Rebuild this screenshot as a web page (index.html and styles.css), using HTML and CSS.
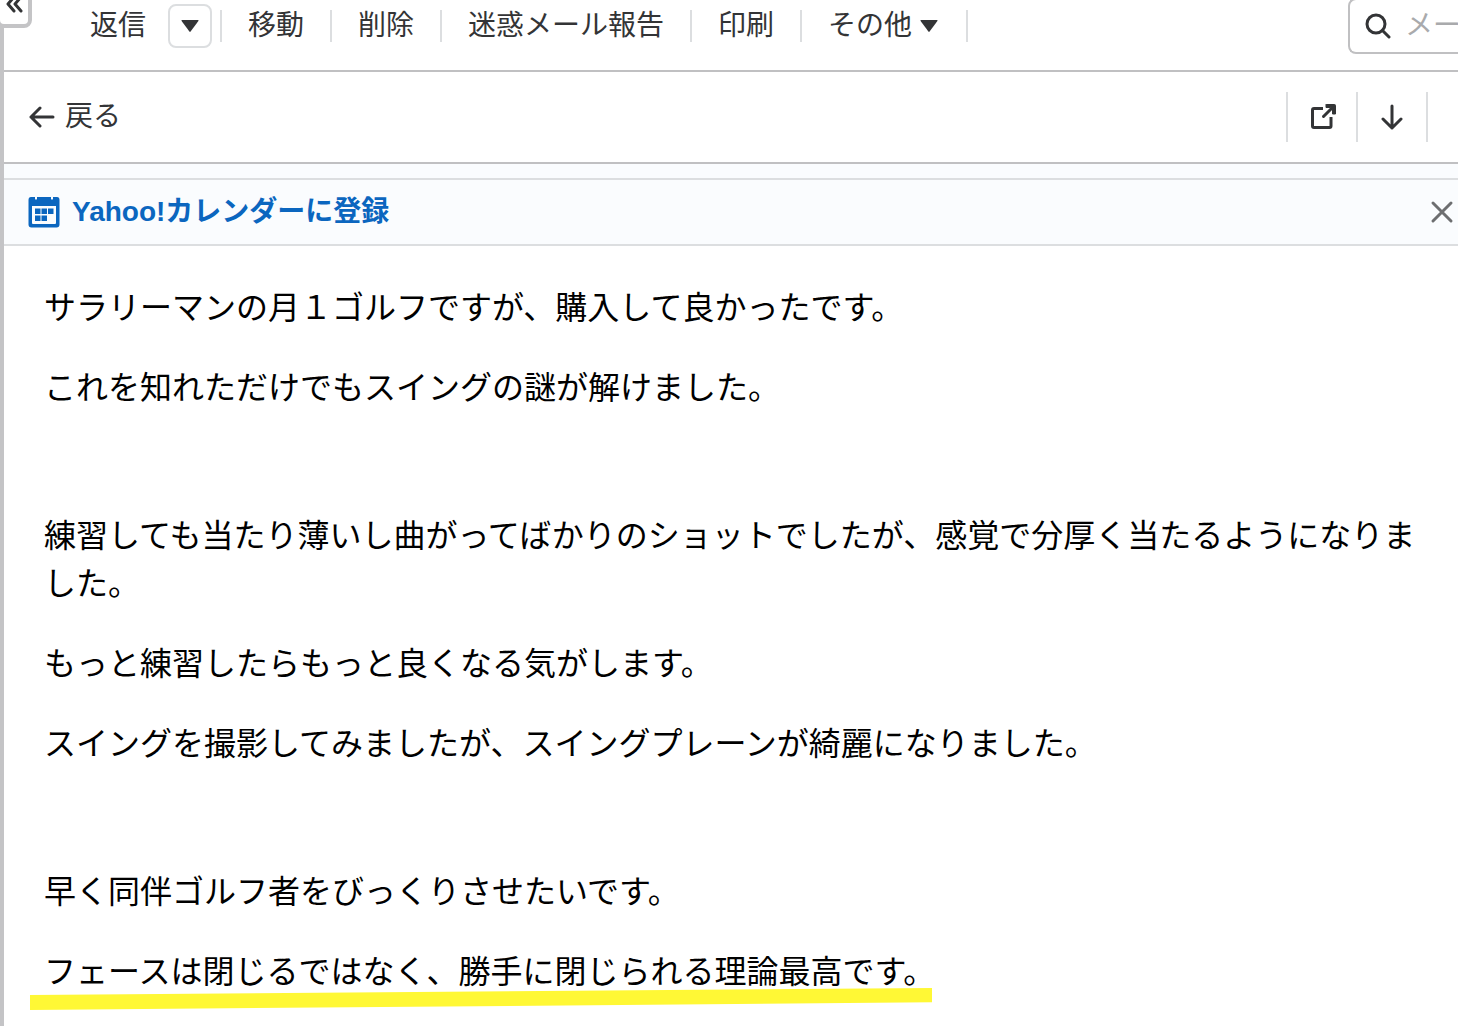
FILE: index.html
```html
<!DOCTYPE html>
<html lang="ja">
<head>
    <meta charset="UTF-8">
    <title>Yahoo!メール</title>
    <link rel="stylesheet" href="styles.css">
</head>
<body>

    <button class="collapse" type="button" aria-label="閉じる">
        <svg width="20" height="20" viewBox="0 0 20 20">
            <path d="M10 3 L4 10 L10 17 M17 3 L11 10 L17 17"/>
        </svg>
    </button>

    <div class="mail">
        <header class="toolbar">
            <div class="menu">
                <div class="menu-item reply">
                    <button type="button">返信</button>
                    <button class="reply-more" type="button" aria-label="返信メニュー">
                        <svg class="caret" width="18" height="12" viewBox="0 0 18 12"><path d="M1 0h16q1 0 .4 1L9.600 11.500q-.6.800-1.200 0L.6 1Q0 0 1 0z"/></svg>
                    </button>
                </div>
                <div class="menu-item"><button type="button">移動</button></div>
                <div class="menu-item"><button type="button">削除</button></div>
                <div class="menu-item"><button type="button">迷惑メール報告</button></div>
                <div class="menu-item"><button type="button">印刷</button></div>
                <div class="menu-item">
                    <button class="others" type="button">その他
                        <svg class="caret" width="18" height="12" viewBox="0 0 18 12"><path d="M1 0h16q1 0 .4 1L9.600 11.500q-.6.800-1.200 0L.6 1Q0 0 1 0z"/></svg>
                    </button>
                </div>
            </div>
            <label class="search">
                <svg width="26" height="26" viewBox="0 0 26 26">
                    <circle cx="11" cy="11" r="9"/>
                    <path d="M17.500 17.500 L24 24"/>
                </svg>
                <input type="text" placeholder="メー" aria-label="メール検索">
            </label>
        </header>

        <nav class="subbar">
            <a class="back" href="#">
                <svg width="26" height="22" viewBox="0 0 26 22">
                    <path d="M11 2 L2 11 L11 20 M2 11 H24"/>
                </svg>
                戻る
            </a>
            <div class="tools">
                <button type="button" aria-label="別ウィンドウで開く">
                    <svg width="28" height="26" viewBox="0 0 28 26">
                        <path class="butt" d="M15 4.500H6Q4.500 4.500 4.500 6V22Q4.500 23.500 6 23.500H21.500Q23 23.500 23 22V13"/>
                        <path d="M15.500 12.500 L24 4"/>
                        <path class="fill" d="M19 .5H26.500Q27.500 .5 27.500 1.500V10H24.500V6L22 3.500H18V.5z"/>
                    </svg>
                </button>
                <button type="button" aria-label="次のメール">
                    <svg width="22" height="26" viewBox="0 0 22 26">
                        <path d="M2 15 L11 24 L20 15 M11 24 V2"/>
                    </svg>
                </button>
            </div>
        </nav>

        <div class="strip"></div>

        <div class="notice">
            <a class="calendar" href="#">
                <svg width="32" height="32" viewBox="0 0 32 32">
                    <path fill-rule="evenodd" d="M3 1H7V3Q8 4.500 9 3V1H23V3Q24 4.500 25 3V1H29Q31.500 1 31.500 4V28.500Q31.500 31.500 28.500 31.500H3.500Q.5 31.500 .5 28.500V4Q.5 1 3 1zM4 10V27Q4 28 5 28H27Q28 28 28 27V10z"/>
                    <path d="M13.500 12.500h5.500v5.500h-5.500zM20 12.500h5.500v5.500h-5.500zM7 12.500h5.500v5.500H7zM7 19.500h5.500v5.500H7zM13.500 19.500h5.500v5.500h-5.500z"/>
                </svg>
                Yahoo!カレンダーに登録
            </a>
            <button class="close" type="button" aria-label="閉じる">
                <svg width="24" height="24" viewBox="0 0 24 24">
                    <path d="M3 3 L21 21 M21 3 L3 21"/>
                </svg>
            </button>
        </div>

        <main class="message">
            <p>サラリーマンの月１ゴルフですが、購入して良かったです。</p>
            <p>これを知れただけでもスイングの謎が解けました。</p>
            <p class="blank"></p>
            <p>練習しても当たり薄いし曲がってばかりのショットでしたが、感覚で分厚く当たるようになりました。</p>
            <p>もっと練習したらもっと良くなる気がします。</p>
            <p>スイングを撮影してみましたが、スイングプレーンが綺麗になりました。</p>
            <p class="blank"></p>
            <p>早く同伴ゴルフ者をびっくりさせたいです。</p>
            <p><span class="marker">フェースは閉じるではなく、勝手に閉じられる理論最高です。</span></p>
        </main>
    </div>

</body>
</html>
```

FILE: styles.css
```css
* {
    box-sizing: border-box;
}

body {
    margin: 0;
    background-color: #fff;
    color: #333436;
    font-family: "Liberation Sans", "Noto Sans CJK JP", sans-serif;
    font-size: 28px;
    line-height: 40px;
    overflow-x: hidden;
}

button {
    margin: 0;
    padding: 0;
    border: none;
    background: none;
    color: inherit;
    font: inherit;
    cursor: pointer;
}

a {
    color: inherit;
    text-decoration: none;
}

svg {
    display: block;
    flex: none;
    fill: none;
    stroke: #333436;
    stroke-width: 3;
    stroke-linecap: round;
    stroke-linejoin: round;
}

.mail {
    min-height: 100vh;
    border-left: 4px solid #c4c4c6;
}

/* sidebar toggle, hangs over the left edge */
.collapse {
    position: absolute;
    top: -20px;
    left: -4px;
    width: 36px;
    height: 48px;
    padding-left: 4px;
    background-color: #fff;
    border: 4px solid #c4c4c6;
    border-radius: 8px;
}

.toolbar {
    display: flex;
    justify-content: space-between;
    height: 72px;
    border-bottom: 2px solid #c0c0c2;
}

.menu {
    display: flex;
    padding: 4px 0 0 60px;
    white-space: nowrap;
}

.menu-item {
    position: relative;
    height: 44px;
    padding: 2px 28px 0 26px;
}

.menu-item::after {
    content: "";
    position: absolute;
    top: 6px;
    right: 0;
    width: 2px;
    height: 32px;
    background-color: #dcdee0;
}

.menu-item:last-child {
    padding-right: 30px;
}

.reply {
    display: flex;
    gap: 22px;
    padding: 0 10px 0 26px;
}

.reply-more {
    display: flex;
    align-items: center;
    justify-content: center;
    width: 44px;
    height: 44px;
    border: 2px solid #dcdee0;
    border-radius: 8px;
}

.caret {
    fill: #333436;
    stroke: none;
}

.others {
    display: flex;
    align-items: center;
    gap: 8px;
}

.search {
    display: flex;
    align-items: center;
    gap: 14px;
    width: 110px;
    height: 56px;
    margin-top: -2px;
    padding-left: 15px;
    border: 2px solid #c0c0c2;
    border-right: none;
    border-radius: 8px 0 0 8px;
}

.search input {
    flex: 1;
    min-width: 0;
    padding: 0;
    border: none;
    outline: none;
    background: none;
    font: inherit;
}

.search input::placeholder {
    color: #a9aaac;
}

.subbar {
    display: flex;
    align-items: center;
    justify-content: space-between;
    height: 92px;
    padding: 0 30px 0 25px;
    border-bottom: 2px solid #c0c0c2;
}

.back {
    display: flex;
    align-items: center;
    gap: 10px;
}

.tools {
    display: flex;
    border-left: 2px solid #dcdee0;
}

.tools button {
    display: flex;
    align-items: center;
    justify-content: center;
    width: 70px;
    height: 50px;
    border-right: 2px solid #dcdee0;
}

.tools .butt {
    stroke-linecap: butt;
}

.tools .fill {
    fill: #333436;
    stroke-width: 1;
}

.strip {
    height: 14px;
    background-color: #fafcfe;
}

.notice {
    display: flex;
    align-items: center;
    justify-content: space-between;
    height: 68px;
    padding: 0 4px 0 24px;
    background-color: #fafcfe;
    border-top: 2px solid #dcdee0;
    border-bottom: 2px solid #dcdee0;
}

.calendar {
    display: flex;
    align-items: center;
    gap: 12px;
    color: #0b66bf;
    font-weight: bold;
}

.calendar svg {
    fill: #0b66bf;
    stroke: none;
}

.close svg {
    stroke: #6d6e70;
}

.message {
    padding: 38px 36px 0 40px;
    color: #000;
    font-size: 32px;
    line-height: 48px;
}

.message p {
    margin: 0 0 32px;
}

.message .blank {
    height: 36px;
}

.marker {
    position: relative;
}

/* hand-drawn highlighter stroke, slightly tilted */
.marker::after {
    content: "";
    position: absolute;
    left: -14px;
    right: 3px;
    bottom: -20px;
    height: 22px;
    background-color: #fff835;
    clip-path: polygon(0 32%, 100% 0, 100% 65%, 0 100%);
}
```
